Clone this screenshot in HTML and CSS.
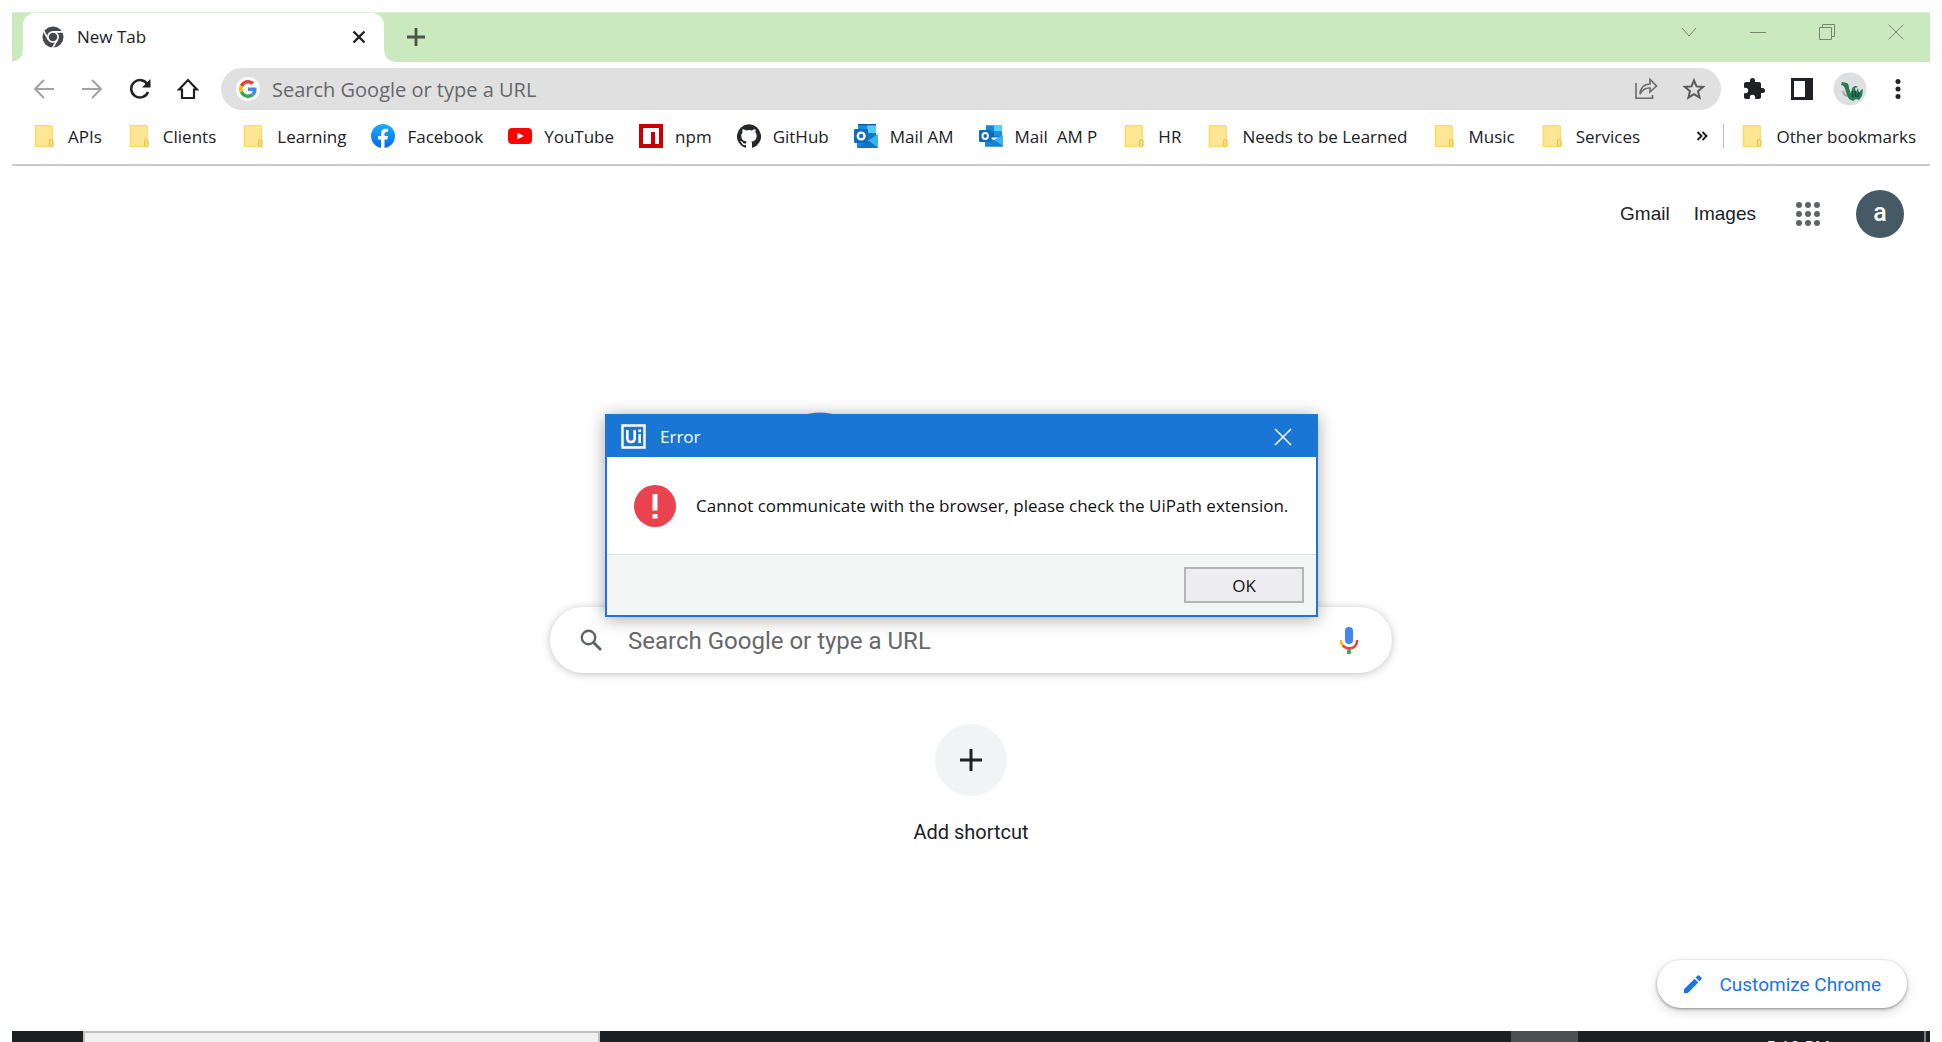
FILE: index.html
```html
<!DOCTYPE html>
<html lang="en">
<head>
<meta charset="utf-8">
<title>New Tab</title>
<link rel="stylesheet" href="styles.css">
</head>
<body>
<svg class="defs" aria-hidden="true">
  <symbol id="folder" viewBox="0 0 24 24"><path d="M3 1.5h17.5v14H21q.5 0 .5 1V21q0 1.500-1 1.500H3z" fill="#ffe694"/><path d="M3.500 1v22" stroke="#fdd95b" stroke-width="1.500"/><path d="M3 1.700h16.500q.8 0 .8.8V15M3 22.300h15" fill="none" stroke="#fcdc66" stroke-width="1.200"/><path d="M17.700 22V17q0-1.500 1.500-1.500t1.700 1.500v4q0 1.500-1.500 1.500t-1.700-1" fill="none" stroke="#e6bf3a" stroke-width="1.200"/></symbol>
  <symbol id="outlook" viewBox="0 0 24 24"><path d="M7 1.500h16v12H7z" fill="#0a66b8"/><path d="M7 1.500h8v6H7z" fill="#1488d8"/><path d="M15 1.500h8v6h-8z" fill="#50d0fa"/><path d="M15 7.500h8v5h-8z" fill="#1a90dd"/><path d="M6 12l9 4 9-4v10.500H6z" fill="#1a86d9"/><path d="M24 11v11L15 16z" fill="#37b4ee"/><path d="M6 22.500l9-6.500 9 6.500z" fill="#1680d2"/><rect y="6" width="12.500" height="12" rx="1" fill="#0f6cbd"/><ellipse cx="6.200" cy="12" rx="2.700" ry="3" fill="none" stroke="#fff" stroke-width="1.900"/></symbol>
  <symbol id="outlook-square" viewBox="0 0 24 24"><path d="M4 0h18v16H4z" fill="#1490df"/><path d="M4 0h18v1.500H4z" fill="#0a5fa8"/><path d="M13 1.500h9v8h-9z" fill="#50d0fa"/><path d="M13 9h9v4l-5 3h-4z" fill="#1278c8"/><path d="M3 14l11 3 10-7v14H3z" fill="#1a86d9"/><path d="M24 10v14l-9.500-7.500z" fill="#37b4ee"/><path d="M3 24l11.500-7.500L24 24z" fill="#1272c4"/><rect y="5" width="14" height="14" rx="1" fill="#0f6cbd"/><circle cx="7.200" cy="12" r="3.400" fill="none" stroke="#fff" stroke-width="2.400"/></symbol>
  <symbol id="google" viewBox="0 0 48 48"><path fill="#EA4335" d="M24 9.500c3.540 0 6.710 1.220 9.210 3.600l6.850-6.850C35.900 2.380 30.470 0 24 0 14.620 0 6.510 5.380 2.560 13.220l7.980 6.190C12.430 13.720 17.740 9.500 24 9.500z"/><path fill="#4285F4" d="M46.980 24.550c0-1.570-.15-3.090-.38-4.550H24v9.020h12.940c-.58 2.960-2.260 5.480-4.780 7.180l7.730 6c4.510-4.180 7.090-10.360 7.090-17.650z"/><path fill="#FBBC05" d="M10.530 28.590c-.48-1.450-.76-2.990-.76-4.590s.27-3.140.76-4.590l-7.980-6.190C.92 16.460 0 20.120 0 24c0 3.880.92 7.540 2.560 10.780l7.970-6.190z"/><path fill="#34A853" d="M24 48c6.480 0 11.930-2.130 15.890-5.810l-7.730-6c-2.150 1.450-4.920 2.300-8.160 2.300-6.260 0-11.570-4.220-13.470-9.910l-7.980 6.190C6.510 42.620 14.620 48 24 48z"/></symbol>
</svg>

<div class="window">
  <header class="tabstrip">
    <div class="tab">
      <svg class="favicon" viewBox="0 0 24 24"><circle cx="12" cy="12" r="11.500" fill="#45494d"/><g fill="none" stroke="#fff" stroke-width="1.800"><circle cx="12" cy="12" r="5.600"/><path d="M12 6.400h11M7.100 14.800L1.800 5.500M16.900 14.800L11.500 24"/></g></svg>
      <span class="tab-title">New Tab</span>
      <button class="icon-button tab-close" aria-label="Close tab"><svg width="14" height="14" viewBox="0 0 14 14"><path d="M1.500 1.500l11 11m0-11l-11 11" stroke="#202124" stroke-width="2.400"/></svg></button>
    </div>
    <button class="icon-button new-tab" aria-label="Open new tab"><svg width="20" height="20" viewBox="0 0 20 20"><path d="M10 1v18M1 10h18" stroke="#4a5547" stroke-width="2.800"/></svg></button>
    <div class="window-controls">
      <button class="icon-button" aria-label="Search tabs"><svg width="16" height="16" viewBox="0 0 16 16"><path d="M1 4l7 8 7-8"/></svg></button>
      <button class="icon-button" aria-label="Minimize"><svg width="16" height="16" viewBox="0 0 16 16"><path d="M0 8.500h16"/></svg></button>
      <button class="icon-button" aria-label="Restore"><svg width="16" height="16" viewBox="0 0 16 16"><path d="M.5 3.500h12v12H.5zM3.500 3V.5h12v12H13"/></svg></button>
      <button class="icon-button" aria-label="Close window"><svg width="16" height="16" viewBox="0 0 16 16"><path d="M.5.5l15 15m0-15l-15 15"/></svg></button>
    </div>
  </header>

  <div class="toolbar">
    <button class="icon-button" aria-label="Back"><svg width="22" height="22" viewBox="0 0 22 22" fill="none" stroke="#a2a2a2" stroke-width="2"><path d="M21 11H2.500M11 2L2 11l9 9"/></svg></button>
    <button class="icon-button" aria-label="Forward"><svg width="22" height="22" viewBox="0 0 22 22" fill="none" stroke="#a2a2a2" stroke-width="2"><path d="M1 11h18.500M11 2l9 9-9 9"/></svg></button>
    <button class="icon-button" aria-label="Reload"><svg width="22" height="22" viewBox="0 0 22 22"><path d="M18.500 6.500A8.700 8.700 0 1 0 19 14" fill="none" stroke="#202124" stroke-width="2.500"/><path d="M21.500 1v8.500H13z" fill="#202124"/></svg></button>
    <button class="icon-button" aria-label="Home"><svg width="22" height="22" viewBox="0 0 22 22"><path d="M2 11.500L11 2l9 9.500h-3V20H5v-8.500z" fill="none" stroke="#202124" stroke-width="2.200"/></svg></button>
    <div class="omnibox">
      <span class="engine"><svg width="18" height="18"><use href="#google"/></svg></span>
      <input type="text" aria-label="Address and search bar" placeholder="Search Google or type a URL">
      <button class="icon-button" aria-label="Share"><svg width="24" height="24" viewBox="0 0 24 24" fill="none" stroke="#6b6b6b" stroke-width="1.600"><path d="M2 6v15.200h16.500V18"/><path d="M6 17q.5-9.500 10-10V2.500l6.500 6.500-6.500 6v-4q-6.500-.5-10 6z"/></svg></button>
      <button class="icon-button" aria-label="Bookmark this tab"><svg width="24" height="24" viewBox="0 0 24 24"><path d="M12 3.300l2.500 6.100 6.600.5-5.100 4.300 1.600 6.500-5.600-3.500-5.600 3.500L8 14.200 2.900 9.900l6.600-.5z" fill="none" stroke="#5a5a5a" stroke-width="2"/></svg></button>
    </div>
    <button class="icon-button" aria-label="Extensions"><svg width="24" height="24" viewBox="0 0 24 24"><path fill="#202124" d="M20.500 11H19V7c0-1.100-.9-2-2-2h-4V3.500a2.500 2.500 0 0 0-5 0V5H4c-1.100 0-1.990.9-1.990 2v3.800H3.500a2.700 2.700 0 0 1 0 5.400H2V20c0 1.100.9 2 2 2h3.800v-1.500a2.700 2.700 0 0 1 5.400 0V22H17c1.100 0 2-.9 2-2v-4h1.500a2.500 2.500 0 0 0 0-5z"/></svg></button>
    <button class="icon-button" aria-label="Side panel"><svg width="22" height="22" viewBox="0 0 22 22"><path d="M0 0h22v22H0zM3 3v16h11V3z" fill="#202124" fill-rule="evenodd"/></svg></button>
    <button class="icon-button" aria-label="Profile"><svg width="34" height="34" viewBox="0 0 34 34"><circle cx="17" cy="17" r="16.500" fill="#dedfe0"/><path d="M10 18q2 5 6 6l-2 1q-4-1-5-5z" fill="#a5a8a6"/><path d="M9 10l5 1q2 1 2 5l2 6 1-5q1-3 4-3l2 1-3 1 1 4 2-4 1 5 2-3 2-1-1 7-3 4-3-1-3 2-4-2-2-4q-1-3-2-6-1-4-4-4z" fill="#2b7a56"/><path d="M19 19l1 6m2-6l1 6m3-5l-1 5" stroke="#134b37" stroke-width="1.500"/></svg></button>
    <button class="icon-button" aria-label="Menu"><svg width="6" height="22" viewBox="0 0 6 22" fill="#202124"><circle cx="3" cy="3.500" r="2.500"/><circle cx="3" cy="11" r="2.500"/><circle cx="3" cy="18.500" r="2.500"/></svg></button>
  </div>

  <nav class="bookmarks" aria-label="Bookmarks">
    <a href="#"><svg><use href="#folder"/></svg>APIs</a>
    <a href="#"><svg><use href="#folder"/></svg>Clients</a>
    <a href="#"><svg><use href="#folder"/></svg>Learning</a>
    <a href="#"><svg viewBox="0 0 24 24"><defs><linearGradient id="fb" x2="0" y2="1"><stop stop-color="#19afff"/><stop offset="1" stop-color="#0866f0"/></linearGradient></defs><circle cx="12" cy="12" r="12" fill="url(#fb)"/><path d="M10 24v-8.500H7V12h3V9.400C10 6.400 11.800 4.700 14.500 4.700c1.300 0 2.500.2 2.500.2v3h-1.500C14 7.900 13.500 8.800 13.500 9.700V12h3.400l-.6 3.500h-2.800V24z" fill="#fff"/></svg>Facebook</a>
    <a href="#"><svg viewBox="0 0 24 24"><rect y="4" width="24" height="16" rx="4" fill="#f00"/><path d="M9.500 8.800l6.500 3.200-6.500 3.200z" fill="#fff"/></svg>YouTube</a>
    <a href="#"><svg viewBox="0 0 24 24"><path d="M0 0h24v24H0z" fill="#c80000"/><path d="M4 4h16v16h-4V8h-4v12H4z" fill="#fff"/></svg>npm</a>
    <a href="#"><svg viewBox="0 0 24 24"><path fill="#24292e" d="M12 .3a12 12 0 0 0-3.800 23.400c.6.100.8-.3.800-.6v-2c-3.300.7-4-1.600-4-1.600-.6-1.400-1.400-1.800-1.400-1.800-1-.7.100-.7.100-.7 1.200 0 1.900 1.200 1.900 1.200 1 1.800 2.800 1.300 3.500 1 0-.8.400-1.300.7-1.600-2.700-.3-5.500-1.300-5.500-6 0-1.200.5-2.300 1.300-3.100-.2-.4-.6-1.600 0-3.200 0 0 1-.3 3.400 1.200a11.500 11.500 0 0 1 6 0c2.300-1.500 3.300-1.200 3.300-1.200.6 1.600.2 2.800 0 3.200.9.800 1.300 1.900 1.300 3.200 0 4.600-2.800 5.600-5.500 5.900.5.400.9 1 .9 2.200v3.300c0 .3.100.7.800.6A12 12 0 0 0 12 .3"/></svg>GitHub</a>
    <a href="#"><svg><use href="#outlook-square"/></svg>Mail AM</a>
    <a href="#"><svg><use href="#outlook"/></svg>Mail&nbsp; AM P</a>
    <a href="#"><svg><use href="#folder"/></svg>HR</a>
    <a href="#"><svg><use href="#folder"/></svg>Needs to be Learned</a>
    <a href="#"><svg><use href="#folder"/></svg>Music</a>
    <a href="#"><svg><use href="#folder"/></svg>Services</a>
    <div class="bookmarks-end">
      <button class="icon-button overflow" aria-label="More bookmarks"><svg width="12" height="10" viewBox="0 0 12 10"><path d="M1.500 1l4 4-4 4M6.500 1l4 4-4 4" fill="none" stroke="#202124" stroke-width="2"/></svg></button>
      <a href="#"><svg><use href="#folder"/></svg>Other bookmarks</a>
    </div>
  </nav>

  <main class="page">
    <nav class="account" aria-label="Google apps">
      <a href="#">Gmail</a>
      <a href="#">Images</a>
      <button class="icon-button apps" aria-label="Google apps"><svg width="24" height="24" viewBox="0 0 24 24" fill="#5f6368"><circle cx="3" cy="3" r="3"/><circle cx="12" cy="3" r="3"/><circle cx="21" cy="3" r="3"/><circle cx="3" cy="12" r="3"/><circle cx="12" cy="12" r="3"/><circle cx="21" cy="12" r="3"/><circle cx="3" cy="21" r="3"/><circle cx="12" cy="21" r="3"/><circle cx="21" cy="21" r="3"/></svg></button>
      <button class="avatar" aria-label="Account">a</button>
    </nav>

    <svg class="logo" viewBox="0 0 408 138" aria-hidden="true"><circle cx="53" cy="51" r="44" fill="none" stroke="#4285f4" stroke-width="13"/></svg>

    <div class="search">
      <svg width="24" height="24" viewBox="0 0 24 24"><circle cx="9.500" cy="9.500" r="6.700" fill="none" stroke="#5f6368" stroke-width="2.400"/><path d="M14.500 14.500l7.500 7.500" stroke="#5f6368" stroke-width="2.800"/></svg>
      <input type="text" aria-label="Search" placeholder="Search Google or type a URL">
      <button class="icon-button" aria-label="Search by voice"><svg width="20" height="28" viewBox="0 0 20 28"><rect x="6" y="1" width="8" height="17" rx="4" fill="#4285f4"/><path d="M8.200 23h3.600v5H8.200z" fill="#34a853"/><path d="M1.800 14q0 3.700 2.700 6.200" fill="none" stroke="#fbbc04" stroke-width="2.400"/><path d="M3.800 19.500q2.500 2.800 6.200 2.800 8 0 8.200-8.300" fill="none" stroke="#ea4335" stroke-width="2.400"/></svg></button>
    </div>

    <button class="shortcut"><span class="shortcut-icon"><svg width="22" height="22" viewBox="0 0 22 22"><path d="M11 0v22M0 11h22" stroke="#202124" stroke-width="3"/></svg></span>Add shortcut</button>

    <button class="customize"><svg width="20" height="20" viewBox="0 0 20 20" fill="#1a73e8"><path d="M1 15.200V19h3.800L15.300 8.500l-3.800-3.800zM18.500 5.200a1 1 0 0 0 0-1.400l-2.300-2.300a1 1 0 0 0-1.400 0L12.600 3.600l3.800 3.800z"/></svg>Customize Chrome</button>

    <section class="dialog" role="alertdialog" aria-labelledby="dialog-title" aria-describedby="dialog-text">
      <header class="dialog-header">
        <svg width="25" height="25" viewBox="0 0 25 25" fill="none" stroke="#fff"><path d="M1.500 1.500h22v22h-22z" stroke-width="2.400"/><path d="M6.300 6v8q0 4 3.700 4t3.700-4V6M18.700 10v9" stroke-width="2.600"/><path d="M18.700 5.500v2.600" stroke-width="2.800"/></svg>
        <h1 id="dialog-title">Error</h1>
        <button class="icon-button dialog-close" aria-label="Close"><svg width="18" height="18" viewBox="0 0 18 18"><path d="M1 1l16 16m0-16L1 17" stroke="#fff" stroke-width="1.500"/></svg></button>
      </header>
      <div class="dialog-body">
        <svg width="42" height="42" viewBox="0 0 42 42"><circle cx="21" cy="21" r="21" fill="#e8434f"/><path d="M18.500 9h5v16.500h-5zM18.500 29h5v4.500h-5z" fill="#fff"/></svg>
        <p id="dialog-text">Cannot communicate with the browser, please check the UiPath extension.</p>
      </div>
      <footer class="dialog-footer"><button class="ok">OK</button></footer>
    </section>
  </main>

  <footer class="taskbar">
    <div class="task-search"></div>
    <div class="task-active"></div>
    <span class="clock">5:10 PM</span>
    <div class="show-desktop"></div>
  </footer>
</div>
</body>
</html>
```
FILE: styles.css
```css
* { box-sizing: border-box; }
body { margin: 0; background: #fff; color: #202124; font-family: "Open Sans", "Noto Sans", sans-serif; font-size: 17px; }
button, input { font: inherit; color: inherit; }
a { color: inherit; text-decoration: none; }
svg { display: block; flex: none; }
.defs { display: none; }
.window { display: flex; flex-direction: column; height: 100vh; padding: 12px 12px 0; overflow: hidden; }
.icon-button { display: flex; align-items: center; justify-content: center; flex: none; width: 48px; height: 42px; padding: 0; border: 0; background: none; }

.tabstrip { display: flex; height: 50px; padding-left: 11px; background: #cae9be; border-top: 1px solid #dcf0d4; }
.tab { position: relative; display: flex; align-items: center; width: 361px; height: 49px; padding: 0 13px 2px 19px; background: #fff; border-radius: 12px 12px 0 0; }
.tab::before, .tab::after { content: ""; position: absolute; bottom: 0; width: 11px; height: 11px; }
.tab::before { right: 100%; background: radial-gradient(circle at 0 0, #cae9be 10px, #fff 11px); }
.tab::after { left: 100%; background: radial-gradient(circle at 100% 0, #cae9be 10px, #fff 11px); }
.favicon { width: 22px; height: 22px; margin-right: 13px; }
.tab-title { flex: 1; }
.tab-close { width: 24px; height: 24px; }
.new-tab { width: 64px; height: 47px; }
.window-controls { display: flex; margin-left: auto; }
.window-controls .icon-button { width: 69px; height: 38px; }
.window-controls path { fill: none; stroke: #74866d; }

.toolbar { display: flex; padding: 6px 8px 0; }
.omnibox { display: flex; align-items: center; flex: 1; height: 42px; margin: 0 9px; padding: 0 3px 0 15px; background: #e0e0e0; border-radius: 21px; }
.engine { display: flex; align-items: center; justify-content: center; width: 24px; height: 24px; background: #fff; border-radius: 50%; }
input { flex: 1; min-width: 0; height: 40px; padding: 0; border: 0; outline: 0; background: none; }
.omnibox input { margin-left: 12px; font-size: 20px; }
input::placeholder { color: #66686b; opacity: 1; }

.bookmarks { display: flex; align-items: center; gap: 25px; height: 56px; padding: 0 14px 2px 20px; border-bottom: 2px solid #cbcbcb; white-space: nowrap; }
.bookmarks a { display: flex; align-items: center; gap: 12px; }
.bookmarks a svg { width: 24px; height: 24px; }
.bookmarks-end { display: flex; margin-left: auto; }
.overflow { height: 24px; width: 44px; border-right: 1px solid #bdbdbd; }
.bookmarks-end a { margin-left: 16px; }

.page { position: relative; display: flex; flex-direction: column; align-items: center; flex: 1; min-height: 0; padding: 24px 26px 23px; font-family: Roboto, sans-serif; font-size: 20px; }
.account { display: flex; align-items: center; align-self: flex-end; gap: 24px; font-family: "Liberation Sans", Arial, sans-serif; font-size: 19px; }
.apps { margin-left: 4px; }
.avatar { width: 48px; height: 48px; padding: 0 0 3px; border: 0; border-radius: 50%; background: #455a64; color: #fff; font-family: Roboto, sans-serif; font-size: 25px; font-weight: 500; }
.logo { width: 408px; height: 138px; margin: 174px 0 57px; }
.search { display: flex; align-items: center; flex: none; width: 842px; max-width: 100%; height: 66px; padding: 0 19px 0 29px; border-radius: 33px; background: #fff; box-shadow: 0 1px 9px rgba(32, 33, 36, .28); }
.search input { margin-left: 25px; padding-top: 2px; font-size: 24px; }
.shortcut { display: flex; flex-direction: column; align-items: center; gap: 24px; margin-top: 51px; padding: 0; border: 0; background: none; line-height: 24px; }
.shortcut-icon { display: flex; align-items: center; justify-content: center; width: 72px; height: 72px; border-radius: 50%; background: #f1f3f4; }
.customize { display: flex; align-items: center; align-self: flex-end; gap: 16px; height: 48px; margin: auto -3px 0 0; padding: 0 26px; border: 0; border-radius: 24px; background: #fff; color: #1a73e8; font-size: 19px; box-shadow: 0 1px 3px rgba(0, 0, 0, .4), 0 4px 12px rgba(0, 0, 0, .15); }

.dialog { position: absolute; top: 248px; left: calc(50% - 366px); width: 713px; border: 2px solid #1c76d2; background: #fff; box-shadow: 0 2px 16px rgba(0, 0, 0, .35); color: #111; font-family: "Open Sans", "Noto Sans", sans-serif; font-size: 17px; }
.dialog-header { display: flex; align-items: center; gap: 14px; height: 41px; padding: 0 0 0 14px; background: #1a76d4; color: #fff; }
.dialog-header h1 { flex: 1; margin: 0; font-size: 17px; font-weight: 400; }
.dialog-close { width: 66px; }
.dialog-body { display: flex; align-items: center; gap: 20px; height: 97px; padding: 0 27px; }
.dialog-body p { margin: 0; white-space: nowrap; }
.dialog-footer { display: flex; align-items: center; justify-content: flex-end; height: 61px; padding: 0 12px; background: #f4f6f6; border-top: 1px solid #dedede; }
.ok { width: 120px; height: 36px; padding: 0; border: 2px solid #b5b5b5; background: #ededf0; }

.taskbar { display: flex; flex: none; height: 11px; background: #1c2023; overflow: hidden; }
.task-search { width: 517px; margin-left: 71px; border: 2px solid #c1c1c1; border-bottom: 0; background: #f1f1f1; }
.task-active { width: 67px; margin: 0 188px 0 auto; background: #4d4f51; }
.clock { padding-top: 6px; color: #fff; font-size: 17px; line-height: 20px; }
.show-desktop { width: 6px; margin-left: 94px; border-left: 2px solid #808080; }
```
